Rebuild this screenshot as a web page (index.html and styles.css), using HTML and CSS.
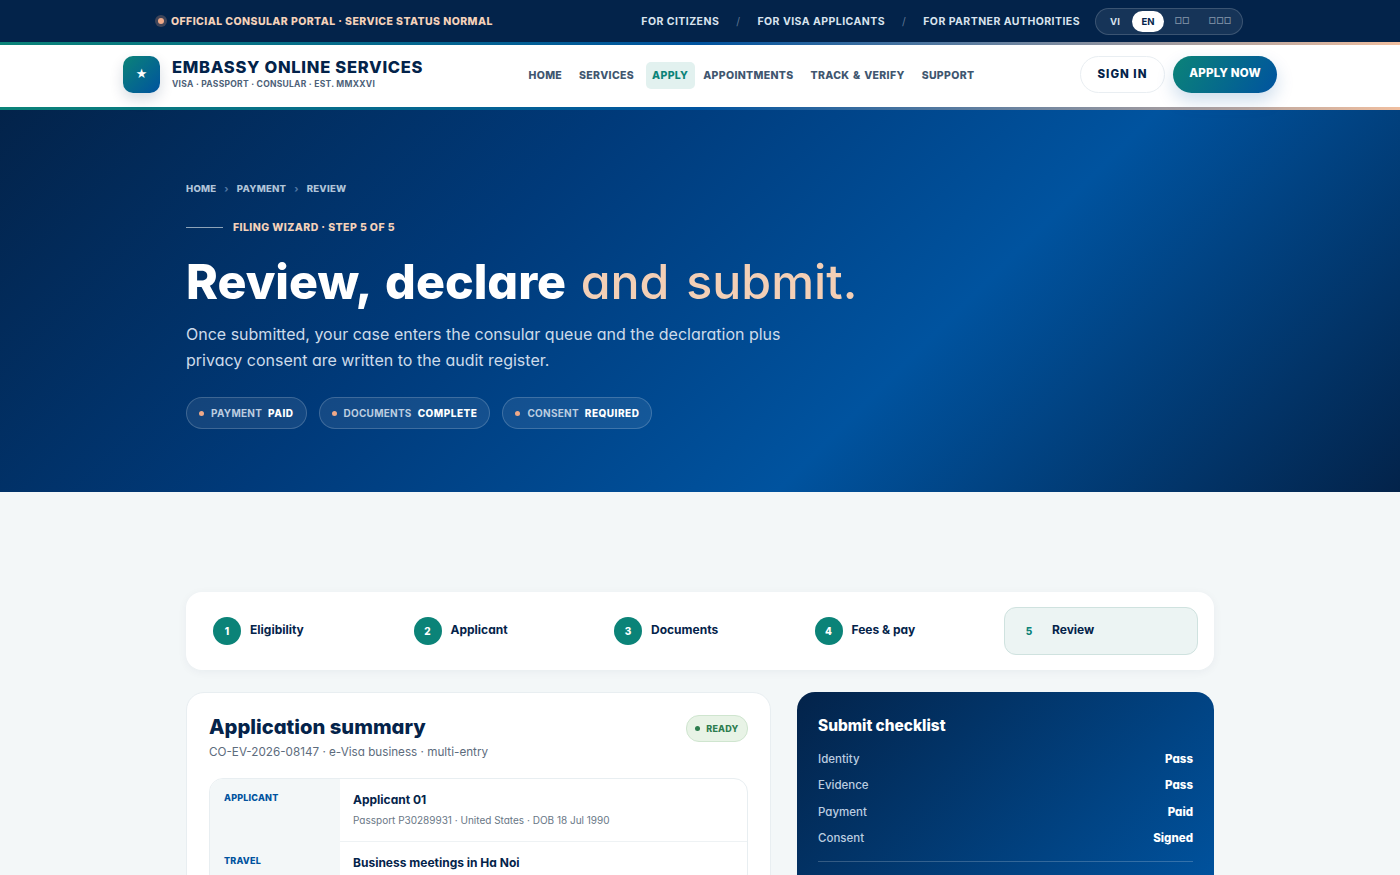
FILE: index.html
```html
<!DOCTYPE html>
<html lang="en">
  <head>
    <meta charset="UTF-8" />
    <meta name="viewport" content="width=device-width, initial-scale=1.0" />
    <title>Embassy Online Services</title>
    <link rel="stylesheet" href="styles.css">
  </head>
  <body>
    <div class="topbar">
      <div class="topbar-inner">
        <div class="status"><span class="status-dot"></span>Official consular portal · Service status normal</div>
        <nav class="audience">
          <a>For citizens</a><span class="slash">/</span>
          <a>For visa applicants</a><span class="slash">/</span>
          <a>For partner authorities</a>
        </nav>
        <div class="lang">
          <span class="vi">VI</span>
          <span class="on">EN</span>
          <span class="off">□□</span>
          <span class="off off-wide">□□□</span>
        </div>
      </div>
    </div>
    <div class="rule"></div>

    <header class="masthead">
      <div class="brand">
        <div class="crest">★</div>
        <div>
          <div class="brand-name">Embassy Online Services</div>
          <div class="brand-sub">Visa · Passport · Consular · Est. MMXXVI</div>
        </div>
      </div>
      <nav class="mainnav">
        <a>Home</a>
        <a>Services</a>
        <a class="active">Apply</a>
        <a>Appointments</a>
        <a>Track &amp; Verify</a>
        <a>Support</a>
      </nav>
      <div class="actions">
        <a class="btn btn-ghost">Sign in</a>
        <a class="btn btn-solid">Apply now</a>
      </div>
    </header>
    <div class="rule"></div>

    <section class="hero">
      <div class="crumbs">
        <a>Home</a><span>›</span><a>Payment</a><span>›</span><a>Review</a>
      </div>
      <div class="eyebrow">Filing wizard · Step 5 of 5</div>
      <h1>Review, declare <em>and submit.</em></h1>
      <p class="lead">Once submitted, your case enters the consular queue and the declaration plus privacy consent are written to the audit register.</p>
      <div class="chips">
        <div class="chip"><i></i>Payment <b>Paid</b></div>
        <div class="chip"><i></i>Documents <b>Complete</b></div>
        <div class="chip"><i></i>Consent <b>Required</b></div>
      </div>
    </section>

    <main class="content">
      <ol class="steps">
        <li><span class="num">1</span><span class="label">Eligibility</span></li>
        <li><span class="num">2</span><span class="label">Applicant</span></li>
        <li><span class="num">3</span><span class="label">Documents</span></li>
        <li><span class="num">4</span><span class="label">Fees &amp; pay</span></li>
        <li class="current"><span class="num">5</span><span class="label">Review</span></li>
      </ol>

      <div class="columns">
        <section class="card">
          <div class="card-head">
            <div>
              <h2>Application summary</h2>
              <div class="card-sub">CO-EV-2026-08147 · e-Visa business · multi-entry</div>
            </div>
            <span class="ready"><i></i>Ready</span>
          </div>
          <div class="table">
            <div class="row">
              <div class="key">Applicant</div>
              <div class="val">
                <strong>Applicant 01</strong>
                <small>Passport P30289931 · United States · DOB 18 Jul 1990</small>
              </div>
            </div>
            <div class="row">
              <div class="key">Travel</div>
              <div class="val">
                <strong>Business meetings in Ha Noi</strong>
              </div>
            </div>
          </div>
        </section>

        <aside class="checklist">
          <h3>Submit checklist</h3>
          <div class="check"><span>Identity</span><b>Pass</b></div>
          <div class="check"><span>Evidence</span><b>Pass</b></div>
          <div class="check"><span>Payment</span><b>Paid</b></div>
          <div class="check"><span>Consent</span><b>Signed</b></div>
          <hr />
        </aside>
      </div>
    </main>
  </body>
</html>
```

FILE: styles.css
```css
html,
body {
  margin: 0;
  padding: 0;
  height: 875px;
  overflow: hidden;
}

body {
  font-family: "Inter", "Noto Sans", sans-serif;
  font-feature-settings: "cv11";
  background: #f3f7f8;
  color: #04234a;
}

a {
  text-decoration: none;
}

.rule {
  height: 3px;
  background: linear-gradient(90deg, #0b8378, #00539f 50%, #f0bfa0);
}

.topbar {
  height: 42px;
  background: #03234a;
}

.topbar-inner {
  width: 1088px;
  height: 42px;
  margin-left: 155px;
  display: flex;
  align-items: center;
}

.status {
  display: flex;
  align-items: center;
  font-size: 10.5px;
  font-weight: 800;
  letter-spacing: 0.42px;
  text-transform: uppercase;
  color: #f5d2ba;
}

.status-dot {
  width: 6px;
  height: 6px;
  border-radius: 50%;
  margin-left: 3px;
  margin-right: 7px;
  background: #efa988;
  box-shadow: 0 0 0 3px rgba(239, 169, 136, 0.25);
}

.audience {
  margin-left: auto;
  display: flex;
  align-items: center;
  font-size: 10.5px;
  font-weight: 700;
  letter-spacing: 0.45px;
  text-transform: uppercase;
  color: #d9e3ee;
}

.slash {
  margin: 0 17px;
  color: #5d7592;
  font-weight: 400;
}

.lang {
  display: flex;
  align-items: center;
  height: 25px;
  margin-left: 15px;
  padding: 0 2px;
  border: 1px solid rgba(255, 255, 255, 0.16);
  border-radius: 14px;
  background: rgba(255, 255, 255, 0.08);
  font-size: 9.5px;
  font-weight: 700;
  color: #d9e3ee;
}

.lang span {
  height: 21px;
  line-height: 21px;
  text-align: center;
  border-radius: 11px;
}

.lang .vi {
  width: 34px;
}

.lang .on {
  width: 32px;
  background: #fff;
  color: #03234a;
}

.lang .off {
  width: 36px;
  font-size: 8.3px;
  color: #75889f;
}

.lang .off-wide {
  width: 40px;
}

.masthead {
  height: 62px;
  padding: 0 123px;
  display: flex;
  align-items: center;
  background: #fff;
}

.brand {
  display: flex;
  align-items: center;
  gap: 12px;
  width: 397px;
}

.crest {
  width: 37px;
  height: 37px;
  margin-top: -4px;
  border-radius: 10px;
  background: linear-gradient(135deg, #0b8378, #00539f);
  box-shadow: 0 6px 14px rgba(3, 35, 74, 0.16);
  color: #fff;
  font-size: 11.5px;
  line-height: 36px;
  text-align: center;
}

.brand-name {
  margin-top: -6px;
  font-size: 16.5px;
  font-weight: 800;
  letter-spacing: 0.72px;
  line-height: 20px;
  text-transform: uppercase;
  color: #03234a;
}

.brand-sub {
  margin-top: 2px;
  font-size: 8.5px;
  font-weight: 700;
  letter-spacing: 0.27px;
  text-transform: uppercase;
  color: #4d6178;
}

.mainnav {
  display: flex;
  align-items: center;
  margin-top: -1px;
  font-size: 10.5px;
  font-weight: 800;
  letter-spacing: 0.33px;
  word-spacing: 1px;
  text-transform: uppercase;
  color: #40566f;
}

.mainnav a {
  height: 27px;
  line-height: 27px;
  padding: 0 8.5px;
  border-radius: 5px;
}

.mainnav .active {
  margin-left: 3px;
  background: #e2f1ef;
  color: #0b8378;
  padding: 0 6.5px;
}

.actions {
  margin-left: auto;
  margin-top: -4px;
  display: flex;
  gap: 8px;
}

.btn {
  height: 37px;
  line-height: 35px;
  border-radius: 19px;
  font-size: 11.5px;
  font-weight: 800;
  text-align: center;
  text-transform: uppercase;
  box-sizing: border-box;
}

.btn-ghost {
  width: 85px;
  border: 1px solid #e9eef2;
  letter-spacing: 1px;
  color: #03234a;
}

.btn-solid {
  width: 104px;
  background: linear-gradient(120deg, #0b8378, #00539f);
  box-shadow: 0 8px 18px rgba(0, 83, 159, 0.2);
  letter-spacing: 0.2px;
  color: #fff;
}

.hero {
  height: 382px;
  box-sizing: border-box;
  padding: 73px 186px 0;
  background: linear-gradient(135deg, #03234a 0%, #003a7a 35%, #00539f 65%, #03234a 100%);
  color: #fff;
}

.crumbs {
  display: flex;
  align-items: center;
  gap: 8px;
  font-size: 9.6px;
  font-weight: 800;
  letter-spacing: 0.2px;
  text-transform: uppercase;
  color: #b0c4d9;
}

.crumbs span {
  color: #4f76a3;
}

.eyebrow {
  display: flex;
  align-items: center;
  margin-top: 27px;
  font-size: 10.5px;
  font-weight: 800;
  letter-spacing: 0.42px;
  text-transform: uppercase;
  color: #f5d2ba;
}

.eyebrow::before {
  content: "";
  width: 37px;
  height: 1px;
  margin-right: 10px;
  background: #8da3b8;
}

h1 {
  margin: 18px 0 0;
  font-size: 48.3px;
  font-weight: 800;
  line-height: 60px;
  word-spacing: 4px;
  color: #fff;
}

h1 em {
  font-style: normal;
  font-weight: 500;
  color: #f3cfb6;
}

.lead {
  width: 620px;
  margin: 9px 0 0;
  font-size: 16px;
  line-height: 26px;
  color: #cddbea;
}

.chips {
  display: flex;
  gap: 12px;
  margin-top: 24px;
}

.chip {
  display: flex;
  align-items: center;
  height: 32px;
  box-sizing: border-box;
  padding: 0 12px;
  border: 1px solid rgba(255, 255, 255, 0.18);
  border-radius: 16px;
  background: rgba(255, 255, 255, 0.08);
  font-size: 10px;
  font-weight: 700;
  letter-spacing: 0.25px;
  text-transform: uppercase;
  color: #bccde0;
}

.chip i {
  width: 5px;
  height: 5px;
  margin-right: 7px;
  border-radius: 50%;
  background: #efa988;
}

.chip b {
  margin-left: 6px;
  font-weight: 800;
  letter-spacing: 0.5px;
  color: #fff;
}

.content {
  width: 1028px;
  margin: 100px 0 0 186px;
}

.steps {
  display: flex;
  list-style: none;
  height: 78px;
  margin: 0;
  padding: 15px 16px;
  box-sizing: border-box;
  gap: 6.5px;
  background: #fff;
  border-radius: 16px;
  box-shadow: 0 2px 10px rgba(3, 35, 74, 0.05);
}

.steps li {
  flex: 1;
  display: flex;
  align-items: center;
  padding: 0 10px;
  gap: 9px;
  border: 1px solid transparent;
  border-radius: 12px;
  font-size: 12px;
  font-weight: 700;
}

.num {
  width: 28px;
  height: 28px;
  line-height: 28px;
  border-radius: 50%;
  background: #0b8378;
  color: #fff;
  font-size: 10px;
  font-weight: 800;
  text-align: center;
}

.label {
  margin-top: -3px;
}

.steps .current {
  background: #ecf4f3;
  border-color: #cfe2df;
}

.current .num {
  background: none;
  color: #0b8378;
}

.columns {
  display: grid;
  grid-template-columns: 585px 417px;
  gap: 26px;
  margin-top: 22px;
}

.card {
  padding: 21px 22px;
  background: #fff;
  border-radius: 18px;
  border: 1px solid #e8eef1;
  height: 200px;
  overflow: hidden;
  box-sizing: border-box;
}

.card-head {
  display: flex;
  justify-content: space-between;
  align-items: flex-start;
}

h2 {
  margin: 0;
  font-size: 20.2px;
  font-weight: 800;
  line-height: 26px;
}

.card-sub {
  margin-top: 5px;
  font-size: 11.7px;
  color: #5d6c7d;
}

.ready {
  display: flex;
  align-items: center;
  height: 25px;
  margin-top: 1px;
  padding: 0 8.5px;
  border: 1px solid #cfe5cf;
  border-radius: 13px;
  background: #e8f3e6;
  color: #2e7d4f;
  font-size: 9px;
  font-weight: 800;
  letter-spacing: 0.2px;
  text-transform: uppercase;
}

.ready i {
  width: 5px;
  height: 5px;
  margin-right: 6px;
  border-radius: 50%;
  background: #2e7d4f;
}

.table {
  margin-top: 19px;
  border: 1px solid #e8eef1;
  border-radius: 14px;
  overflow: hidden;
}

.row {
  display: grid;
  grid-template-columns: 130px 1fr;
}

.key {
  padding: 13px 14px;
  background: #f3f7f8;
  color: #00539f;
  font-size: 9px;
  font-weight: 800;
  letter-spacing: 0.2px;
  text-transform: uppercase;
}

.val {
  padding: 13px 13px 15px;
  border-bottom: 1px solid #eef2f4;
}

.val strong {
  display: block;
  font-size: 12px;
  font-weight: 700;
  line-height: 16px;
}

.val small {
  display: block;
  margin-top: 6px;
  font-size: 10px;
  color: #697786;
}

.checklist {
  height: 200px;
  padding: 23px 21px;
  box-sizing: border-box;
  border-radius: 18px;
  background: linear-gradient(135deg, #03234a, #00539f);
  color: #fff;
}

h3 {
  margin: 0 0 9px;
  font-size: 15.4px;
  font-weight: 800;
  line-height: 22px;
}

.check {
  display: flex;
  justify-content: space-between;
  align-items: center;
  height: 26.3px;
  font-size: 11.5px;
  font-weight: 500;
  color: #bccde0;
}

.check b {
  font-size: 11.5px;
  font-weight: 800;
  color: #fff;
}

hr {
  margin: 10px 0 0;
  border: 0;
  border-top: 1px solid rgba(255, 255, 255, 0.2);
}
```
